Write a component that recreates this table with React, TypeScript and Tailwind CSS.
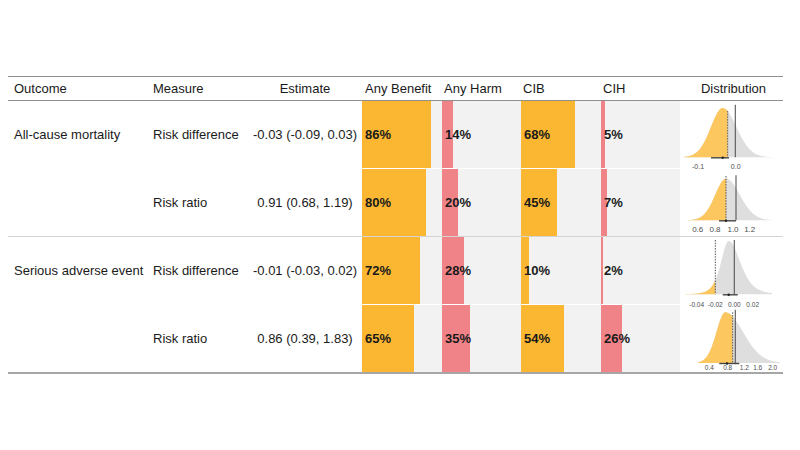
import React from "react";

type Plot = {
  mu: number;
  sdL: number;
  sdR: number;
  nu: number;
  peak: number;
  base: number;
  x0: number;
  x1: number;
  cut: number;
  dashTop: number;
  solidX: number;
  solidTop: number;
  ci: [number, number];
  est: number;
  labelY: number;
  labelSize: number;
  ticks: [string, number][];
};

type Row = {
  outcome?: string;
  measure: string;
  estimate: string;
  benefit: number;
  harm: number;
  cib: number;
  cih: number;
  plot: Plot;
  border: string;
};

const rows: Row[] = [
  {
    outcome: "All-cause mortality",
    measure: "Risk difference",
    estimate: "-0.03 (-0.09, 0.03)",
    benefit: 86,
    harm: 14,
    cib: 68,
    cih: 5,
    border: "h-[68px] border-b border-white",
    plot: {
      mu: 42.7, sdL: 12, sdR: 14, nu: 40, peak: 7, base: 56.3, x0: 4, x1: 94, cut: 47.7,
      dashTop: 10, solidX: 55.3, solidTop: 3.7, ci: [31, 49], est: 42.7,
      labelY: 67.8, labelSize: 7, ticks: [["-0.1", 18], ["0.0", 55.7]],
    },
  },
  {
    measure: "Risk ratio",
    estimate: "0.91 (0.68, 1.19)",
    benefit: 80,
    harm: 20,
    cib: 45,
    cih: 7,
    border: "h-[68px] border-b border-[#d4d4d4]",
    plot: {
      mu: 46, sdL: 11, sdR: 14, nu: 40, peak: 9.7, base: 51.3, x0: 6, x1: 92, cut: 46,
      dashTop: 7, solidX: 56, solidTop: 6.3, ci: [39, 56], est: 46,
      labelY: 62.5, labelSize: 8, ticks: [["0.6", 17.7], ["0.8", 35], ["1.0", 53], ["1.2", 69.7]],
    },
  },
  {
    outcome: "Serious adverse event",
    measure: "Risk difference",
    estimate: "-0.01 (-0.03, 0.02)",
    benefit: 72,
    harm: 28,
    cib: 10,
    cih: 2,
    border: "h-[68px] border-b border-white",
    plot: {
      mu: 48.7, sdL: 8, sdR: 12, nu: 5, peak: 4, base: 57.3, x0: 6, x1: 92, cut: 35.3,
      dashTop: 3, solidX: 54.3, solidTop: 3, ci: [42.7, 57.7], est: 48.7,
      labelY: 70.3, labelSize: 6.5,
      ticks: [["-0.04", 16.7], ["-0.02", 35.3], ["0.00", 54.3], ["0.02", 72.7]],
    },
  },
  {
    measure: "Risk ratio",
    estimate: "0.86 (0.39, 1.83)",
    benefit: 65,
    harm: 35,
    cib: 54,
    cih: 26,
    border: "h-[69px] border-b-2 border-[#a6a6a6]",
    plot: {
      mu: 45.3, sdL: 9, sdR: 18, nu: 40, peak: 7.3, base: 58, x0: 18, x1: 100, cut: 52.7,
      dashTop: 7.3, solidX: 55.3, solidTop: 4.7, ci: [39.3, 59.3], est: 47,
      labelY: 65.3, labelSize: 6.5,
      ticks: [["0.4", 29.3], ["0.8", 47.7], ["1.2", 64.3], ["1.6", 77.7], ["2.0", 92.7]],
    },
  },
];

function curve(p: Plot, from: number, to: number) {
  const pts: string[] = [];
  for (let x = from; x <= to + 0.001; x += 0.5) {
    const z = (x - p.mu) / (x < p.mu ? p.sdL : p.sdR);
    const f = Math.pow(1 + (z * z) / p.nu, -(p.nu + 1) / 2);
    pts.push(`${x.toFixed(2)},${(p.base - (p.base - p.peak) * f).toFixed(2)}`);
  }
  return `M${from},${p.base} L${pts.join(" L")} L${to},${p.base} Z`;
}

function Density({ p }: { p: Plot }) {
  return (
    <svg width="103" height="67" viewBox="0 0 103 67" className="overflow-visible">
      <path d={curve(p, p.x0, p.x1)} fill="#dedede" />
      <path d={curve(p, p.x0, p.cut)} fill="#fcc75e" />
      <line x1={p.solidX} x2={p.solidX} y1={p.solidTop} y2={p.base} stroke="#555" strokeWidth="1.1" />
      <line x1={p.cut} x2={p.cut} y1={p.dashTop} y2={p.base} stroke="#555" strokeWidth="1" strokeDasharray="1.5 1.2" />
      <line x1={p.ci[0]} x2={p.ci[1]} y1={p.base + 0.5} y2={p.base + 0.5} stroke="#444" strokeWidth="1.4" />
      <circle cx={p.est} cy={p.base + 0.5} r="1.2" fill="#222" />
      {p.ticks.map(([t, x]) => (
        <text key={t} x={x} y={p.labelY} textAnchor="middle" fontSize={p.labelSize} fill="#4d4d4d" fontFamily="Liberation Sans, Arial, sans-serif">
          {t}
        </text>
      ))}
    </svg>
  );
}

function BarCell({ value, color }: { value: number; color: string }) {
  return (
    <div className="relative flex items-center bg-[#f2f2f2]">
      <div className={`absolute inset-y-0 left-0 ${color}`} style={{ width: `${value}%` }} />
      <span className="relative pl-[3px] font-bold text-[#1a1a1a]">{value}%</span>
    </div>
  );
}

const cols = "grid grid-cols-[140px_100px_114px_80px_79px_80px_79px_103px]";

export default function App() {
  return (
    <div className="min-h-[450px] w-[800px] bg-white pl-2 pt-[76px] font-['Liberation_Sans',Arial,sans-serif] text-[13px] text-[#1a1a1a]">
      <div className="w-[775px]">
        <div className={`${cols} h-[25px] items-center border-y border-[#8f8f8f]`}>
          <div className="pl-[6px]">Outcome</div>
          <div className="pl-[5px]">Measure</div>
          <div className="text-center">Estimate</div>
          <div className="pl-[3px]">Any Benefit</div>
          <div className="pl-[2px]">Any Harm</div>
          <div className="pl-[2px]">CIB</div>
          <div className="pl-[2px]">CIH</div>
          <div className="pl-[4px] text-center">Distribution</div>
        </div>
        {rows.map((r, i) => (
          <div key={i} className={`${cols} ${r.border}`}>
            <div className="flex items-center pl-[6px]">{r.outcome ?? ""}</div>
            <div className="flex items-center pl-[5px]">{r.measure}</div>
            <div className="flex items-center justify-center whitespace-nowrap">{r.estimate}</div>
            <BarCell value={r.benefit} color="bg-[#fbb731]" />
            <BarCell value={r.harm} color="bg-[#f08387]" />
            <BarCell value={r.cib} color="bg-[#fbb731]" />
            <BarCell value={r.cih} color="bg-[#f08387]" />
            <div className="flex items-start">
              <Density p={r.plot} />
            </div>
          </div>
        ))}
      </div>
    </div>
  );
}
